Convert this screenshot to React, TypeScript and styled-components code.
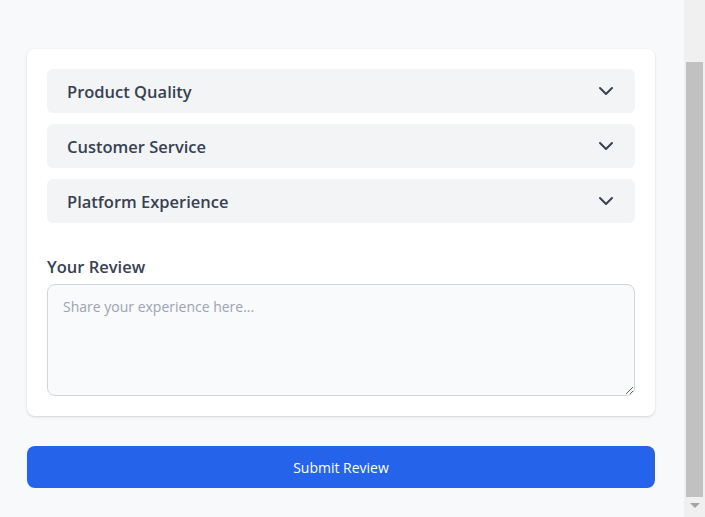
import React from "react";
import styled, { createGlobalStyle } from "styled-components";

const Global = createGlobalStyle`
  html, body { margin: 0; padding: 0; height: 100%; overflow: hidden; background: #f8f9fb; }
  body { font-family: "Open Sans", "Noto Sans", sans-serif; color: #374151; }
  * { box-sizing: border-box; }
`;

const Frame = styled.div`
  display: flex;
  height: 100vh;
  background: #f8f9fb;
`;

const Main = styled.main`
  flex: 1;
  min-width: 0;
  padding: 49px 29px 29px 27px;
  display: flex;
  flex-direction: column;
`;

const ScrollRail = styled.div`
  width: 21px;
  flex-shrink: 0;
  background: #f0f0f0;
  display: flex;
  flex-direction: column;
`;

const RailButton = styled.div`
  height: 17px;
  flex-shrink: 0;
  display: flex;
  align-items: flex-start;
  justify-content: center;
  padding-top: 3px;
`;

const Track = styled.div`
  flex: 1;
  display: flex;
  flex-direction: column;
  padding: 45px 2px 3px;
`;

const Thumb = styled.div`
  flex: 1;
  background: #c1c1c1;
`;

const Arrow = styled.div`
  width: 0;
  height: 0;
  border-left: 5px solid transparent;
  border-right: 5px solid transparent;
  border-top: 5px solid #a3a3a3;
`;

const Card = styled.div`
  background: #ffffff;
  border-radius: 8px;
  box-shadow: 0 1px 3px rgba(0, 0, 0, 0.1), 0 1px 2px rgba(0, 0, 0, 0.06);
  padding: 20px;
  display: flex;
  flex-direction: column;
`;

const Accordion = styled.div`
  display: flex;
  flex-direction: column;
  gap: 11px;
`;

const Item = styled.button`
  display: flex;
  align-items: center;
  justify-content: space-between;
  height: 44px;
  padding: 0 17px 0 20px;
  border: none;
  border-radius: 6px;
  background: #f3f4f6;
  font-family: inherit;
  font-size: 16.5px;
  font-weight: 600;
  color: #374151;
  cursor: pointer;
  text-align: left;
`;

const Chevron = styled.svg`
  width: 24px;
  height: 24px;
  color: #374151;
`;

const Field = styled.div`
  margin-top: 33px;
  display: flex;
  flex-direction: column;
  gap: 6px;
`;

const Label = styled.label`
  font-size: 16.5px;
  font-weight: 600;
  line-height: 22px;
  color: #374151;
`;

const TextArea = styled.textarea`
  height: 112px;
  padding: 12px 15px;
  border: 1px solid #d1d5db;
  border-radius: 8px;
  background: #f9fafb;
  font-family: inherit;
  font-size: 14px;
  color: #374151;
  resize: vertical;
  &::placeholder { color: #9ca3af; }
`;

const Submit = styled.button`
  margin-top: 30px;
  width: 100%;
  height: 42px;
  flex-shrink: 0;
  border: none;
  border-radius: 8px;
  background: #2563eb;
  color: #ffffff;
  font-family: inherit;
  font-size: 14px;
  cursor: pointer;
`;

const sections = ["Product Quality", "Customer Service", "Platform Experience"];

export default function App() {
  return (
    <Frame>
      <Global />
      <Main>
        <Card>
          <Accordion>
            {sections.map((s) => (
              <Item key={s} type="button">
                {s}
                <Chevron viewBox="0 0 24 24" fill="none" stroke="currentColor" strokeWidth={2}>
                  <path strokeLinecap="round" strokeLinejoin="round" d="m6 9 6 6 6-6" />
                </Chevron>
              </Item>
            ))}
          </Accordion>
          <Field>
            <Label htmlFor="review">Your Review</Label>
            <TextArea id="review" placeholder="Share your experience here..." />
          </Field>
        </Card>
        <Submit type="button">Submit Review</Submit>
      </Main>
      <ScrollRail aria-hidden="true">
        <RailButton />
        <Track>
          <Thumb />
        </Track>
        <RailButton>
          <Arrow />
        </RailButton>
      </ScrollRail>
    </Frame>
  );
}
